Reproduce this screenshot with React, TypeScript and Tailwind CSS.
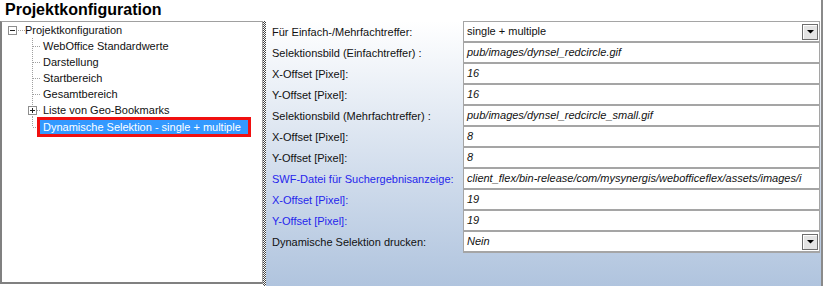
import React from "react";

type Row = {
  label: string;
  value: string;
  italic?: boolean;
  blue?: boolean;
  combo?: boolean;
};

const rows: Row[] = [
  { label: "Für Einfach-/Mehrfachtreffer:", value: "single + multiple", combo: true },
  { label: "Selektionsbild (Einfachtreffer) :", value: "pub/images/dynsel_redcircle.gif", italic: true },
  { label: "X-Offset [Pixel]:", value: "16", italic: true },
  { label: "Y-Offset [Pixel]:", value: "16", italic: true },
  { label: "Selektionsbild (Mehrfachtreffer) :", value: "pub/images/dynsel_redcircle_small.gif", italic: true },
  { label: "X-Offset [Pixel]:", value: "8", italic: true },
  { label: "Y-Offset [Pixel]:", value: "8", italic: true },
  {
    label: "SWF-Datei für Suchergebnisanzeige:",
    value: "client_flex/bin-release/com/mysynergis/webofficeflex/assets/images/i",
    italic: true,
    blue: true,
  },
  { label: "X-Offset [Pixel]:", value: "19", italic: true, blue: true },
  { label: "Y-Offset [Pixel]:", value: "19", italic: true, blue: true },
  { label: "Dynamische Selektion drucken:", value: "Nein", italic: true, combo: true },
];

const children = [
  "WebOffice Standardwerte",
  "Darstellung",
  "Startbereich",
  "Gesamtbereich",
  "Liste von Geo-Bookmarks",
];

const LINE = "#a0a0a0";

function Connector({ plus }: { plus?: boolean }) {
  return (
    <svg width="17" height="16" className="shrink-0">
      <line x1="6.5" y1="0" x2="6.5" y2="16" stroke={LINE} strokeDasharray="1 1" />
      <line x1={plus ? 11 : 7} y1="8.5" x2="15" y2="8.5" stroke={LINE} strokeDasharray="1 1" />
      {plus && (
        <>
          <rect x="2.5" y="4.5" width="8" height="8" fill="#fff" stroke="#8e8e8e" />
          <line x1="4" y1="8.5" x2="9" y2="8.5" stroke="#222" />
          <line x1="6.5" y1="6" x2="6.5" y2="11" stroke="#222" />
        </>
      )}
    </svg>
  );
}

function ComboButton() {
  return (
    <div className="ml-auto mr-px flex h-4 w-4 shrink-0 items-center justify-center border border-[#6e6e6e] bg-[#e4e4e4] shadow-[inset_1px_1px_0_#fff]">
      <svg width="7" height="4">
        <path d="M0 0H7L3.5 3.5Z" fill="#000" />
      </svg>
    </div>
  );
}

export default function App() {
  return (
    <div className="flex h-[286px] w-[825px] bg-white font-['Liberation_Sans',Arial,sans-serif] text-[11px] text-[#111]">
      <div className="flex h-full w-[823px] flex-col border-r-2 border-[#8a8a8a]">
        <div className="h-[21px] pl-[5px] text-[16px] font-bold leading-[20px] text-black">
          Projektkonfiguration
        </div>

        <div className="flex h-[265px]">
          {/* tree */}
          <div className="h-[263px] w-[263px] shrink-0 border border-[#a0a0a0] border-b-2 border-l-2 border-b-[#808080] border-l-[#808080] bg-white leading-[16px]">
            <div className="flex h-4 items-center pl-[6px]">
              <svg width="17" height="16" className="shrink-0">
                <rect x="0.5" y="4.5" width="8" height="8" fill="#fff" stroke="#8e8e8e" />
                <line x1="2" y1="8.5" x2="7" y2="8.5" stroke="#222" />
                <line x1="10" y1="8.5" x2="17" y2="8.5" stroke={LINE} strokeDasharray="1 1" />
              </svg>
              <span>Projektkonfiguration</span>
            </div>
            {children.map((name, i) => (
              <div key={name} className="flex h-4 items-center pl-[24px]">
                <Connector plus={i === children.length - 1} />
                <span>{name}</span>
              </div>
            ))}
            <div className="-mt-px flex h-5 items-center pl-[24px]">
              <svg width="11" height="20" className="shrink-0">
                <line x1="6.5" y1="0" x2="6.5" y2="10" stroke={LINE} strokeDasharray="1 1" />
                <line x1="7" y1="10.5" x2="11" y2="10.5" stroke={LINE} strokeDasharray="1 1" />
              </svg>
              <div className="border-[3px] border-[#f01010] bg-[#3399ff] pl-[3px] pr-[7px] leading-[14px] text-white">
                Dynamische Selektion - single + multiple
              </div>
            </div>
          </div>

          {/* splitter */}
          <div className="h-full w-[3px] shrink-0 bg-[image:repeating-conic-gradient(#444_0%_25%,#fff_0%_50%)] bg-[length:2px_2px]" />

          {/* properties */}
          <div className="h-full flex-1 bg-linear-to-b from-white to-[#b0c4de]">
            {rows.map((row, i) => (
              <div key={i} className={i === 0 ? "flex h-[22px]" : "flex h-[21px]"}>
                <div
                  className={
                    row.blue
                      ? "flex w-[197px] shrink-0 items-center pl-[6px] text-[#2626ec]"
                      : "flex w-[197px] shrink-0 items-center pl-[6px]"
                  }
                >
                  {row.label}
                </div>
                <div
                  className={
                    i === 0
                      ? "flex w-[357px] shrink-0 items-center overflow-hidden whitespace-nowrap border-x border-t border-b-2 border-[#a5a5a5] bg-white pl-[3px]"
                      : "flex w-[357px] shrink-0 items-center overflow-hidden whitespace-nowrap border-x border-b-2 border-[#a5a5a5] bg-white pl-[3px]"
                  }
                >
                  <span className={row.italic ? "italic" : ""}>{row.value}</span>
                  {row.combo && <ComboButton />}
                </div>
              </div>
            ))}
          </div>
        </div>
      </div>
    </div>
  );
}
